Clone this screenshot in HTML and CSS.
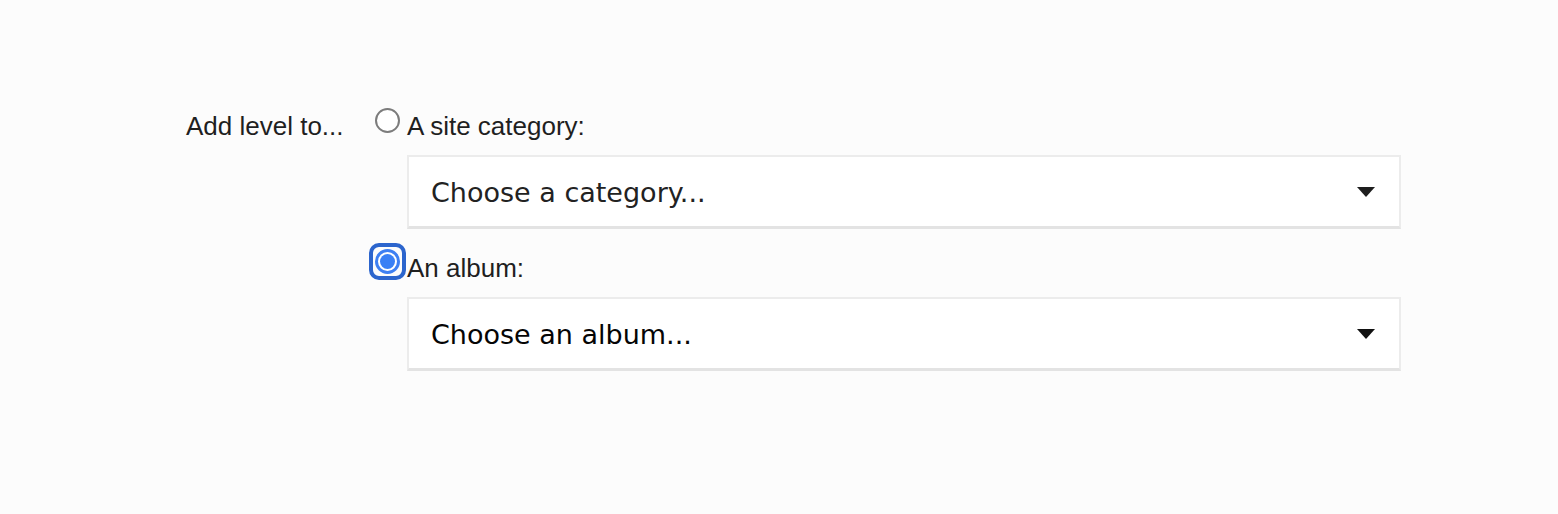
FILE: index.html
```html
<!DOCTYPE html>
<html>

	<head lang="en">
		<meta charset="UTF-8">
		<title>Add level</title>
		<link rel="stylesheet" href="styles.css">
	</head>

	<body>
		<div class="form-row">
			<div class="row-label">Add level to...</div>
			<div class="options">
				<label class="option">
					<span class="radio"></span>
					<span class="option-text">A site category:</span>
				</label>
				<div class="select">
					<span class="select-text">Choose a category...</span>
					<svg class="caret" width="18" height="10" viewBox="0 0 18 10"><path d="M0 0H18L9 10Z" fill="#1e1e1e"/></svg>
				</div>
				<label class="option second">
					<span class="radio checked focused"></span>
					<span class="option-text">An album:</span>
				</label>
				<div class="select">
					<span class="select-text dark">Choose an album...</span>
					<svg class="caret" width="18" height="10" viewBox="0 0 18 10"><path d="M0 0H18L9 10Z" fill="#111"/></svg>
				</div>
			</div>
		</div>
	</body>

</html>
```

FILE: styles.css
```css
*, *::before, *::after {
	margin: 0;
	padding: 0;
	box-sizing: border-box;
}

body {
	background-color: #fcfcfc;
	font-family: "Liberation Sans", Arial, sans-serif;
	font-size: 26px;
	color: #1f1f1f;
}

.form-row {
	display: flex;
	padding: 108px 0 0 186px;
}

.row-label {
	width: 189px;
	padding-top: 4px;
	line-height: 29px;
}

.options {
	width: 1026px;
}

.option {
	display: flex;
	align-items: flex-start;
	line-height: 29px;
}

.option-text {
	padding-top: 4px;
}

.option.second {
	margin-top: 20px;
}

.option.second .option-text {
	padding-top: 5px;
}

.radio {
	position: relative;
	width: 25px;
	height: 25px;
	margin-right: 7px;
	border: 2px solid #7c7c7c;
	border-radius: 50%;
	background-color: #fff;
	flex-shrink: 0;
}

.radio.checked {
	border: 3px solid #3d7ff2;
}

.radio.checked::before {
	content: "";
	position: absolute;
	left: 2px;
	top: 2px;
	width: 15px;
	height: 15px;
	border-radius: 50%;
	background-color: #3a80f5;
}

.radio.focused::after {
	content: "";
	position: absolute;
	left: -9px;
	top: -9px;
	width: 37px;
	height: 37px;
	border: 4px solid #2c65cd;
	border-radius: 10px;
}

.select {
	display: flex;
	align-items: center;
	justify-content: space-between;
	height: 74px;
	margin-left: 32px;
	padding: 0 24px 0 22px;
	background-color: #fff;
	border: 2px solid #ececec;
	border-bottom: 3px solid #e3e3e3;
}

.option + .select {
	margin-top: 14px;
}

.option.second + .select {
	margin-top: 14px;
}

.select-text {
	padding-top: 2px;
	font-family: "DejaVu Sans", Verdana, sans-serif;
	font-size: 27px;
	color: #222;
}

.select-text.dark {
	color: #050505;
}

.caret {
	display: block;
	margin-top: 1px;
}
```
